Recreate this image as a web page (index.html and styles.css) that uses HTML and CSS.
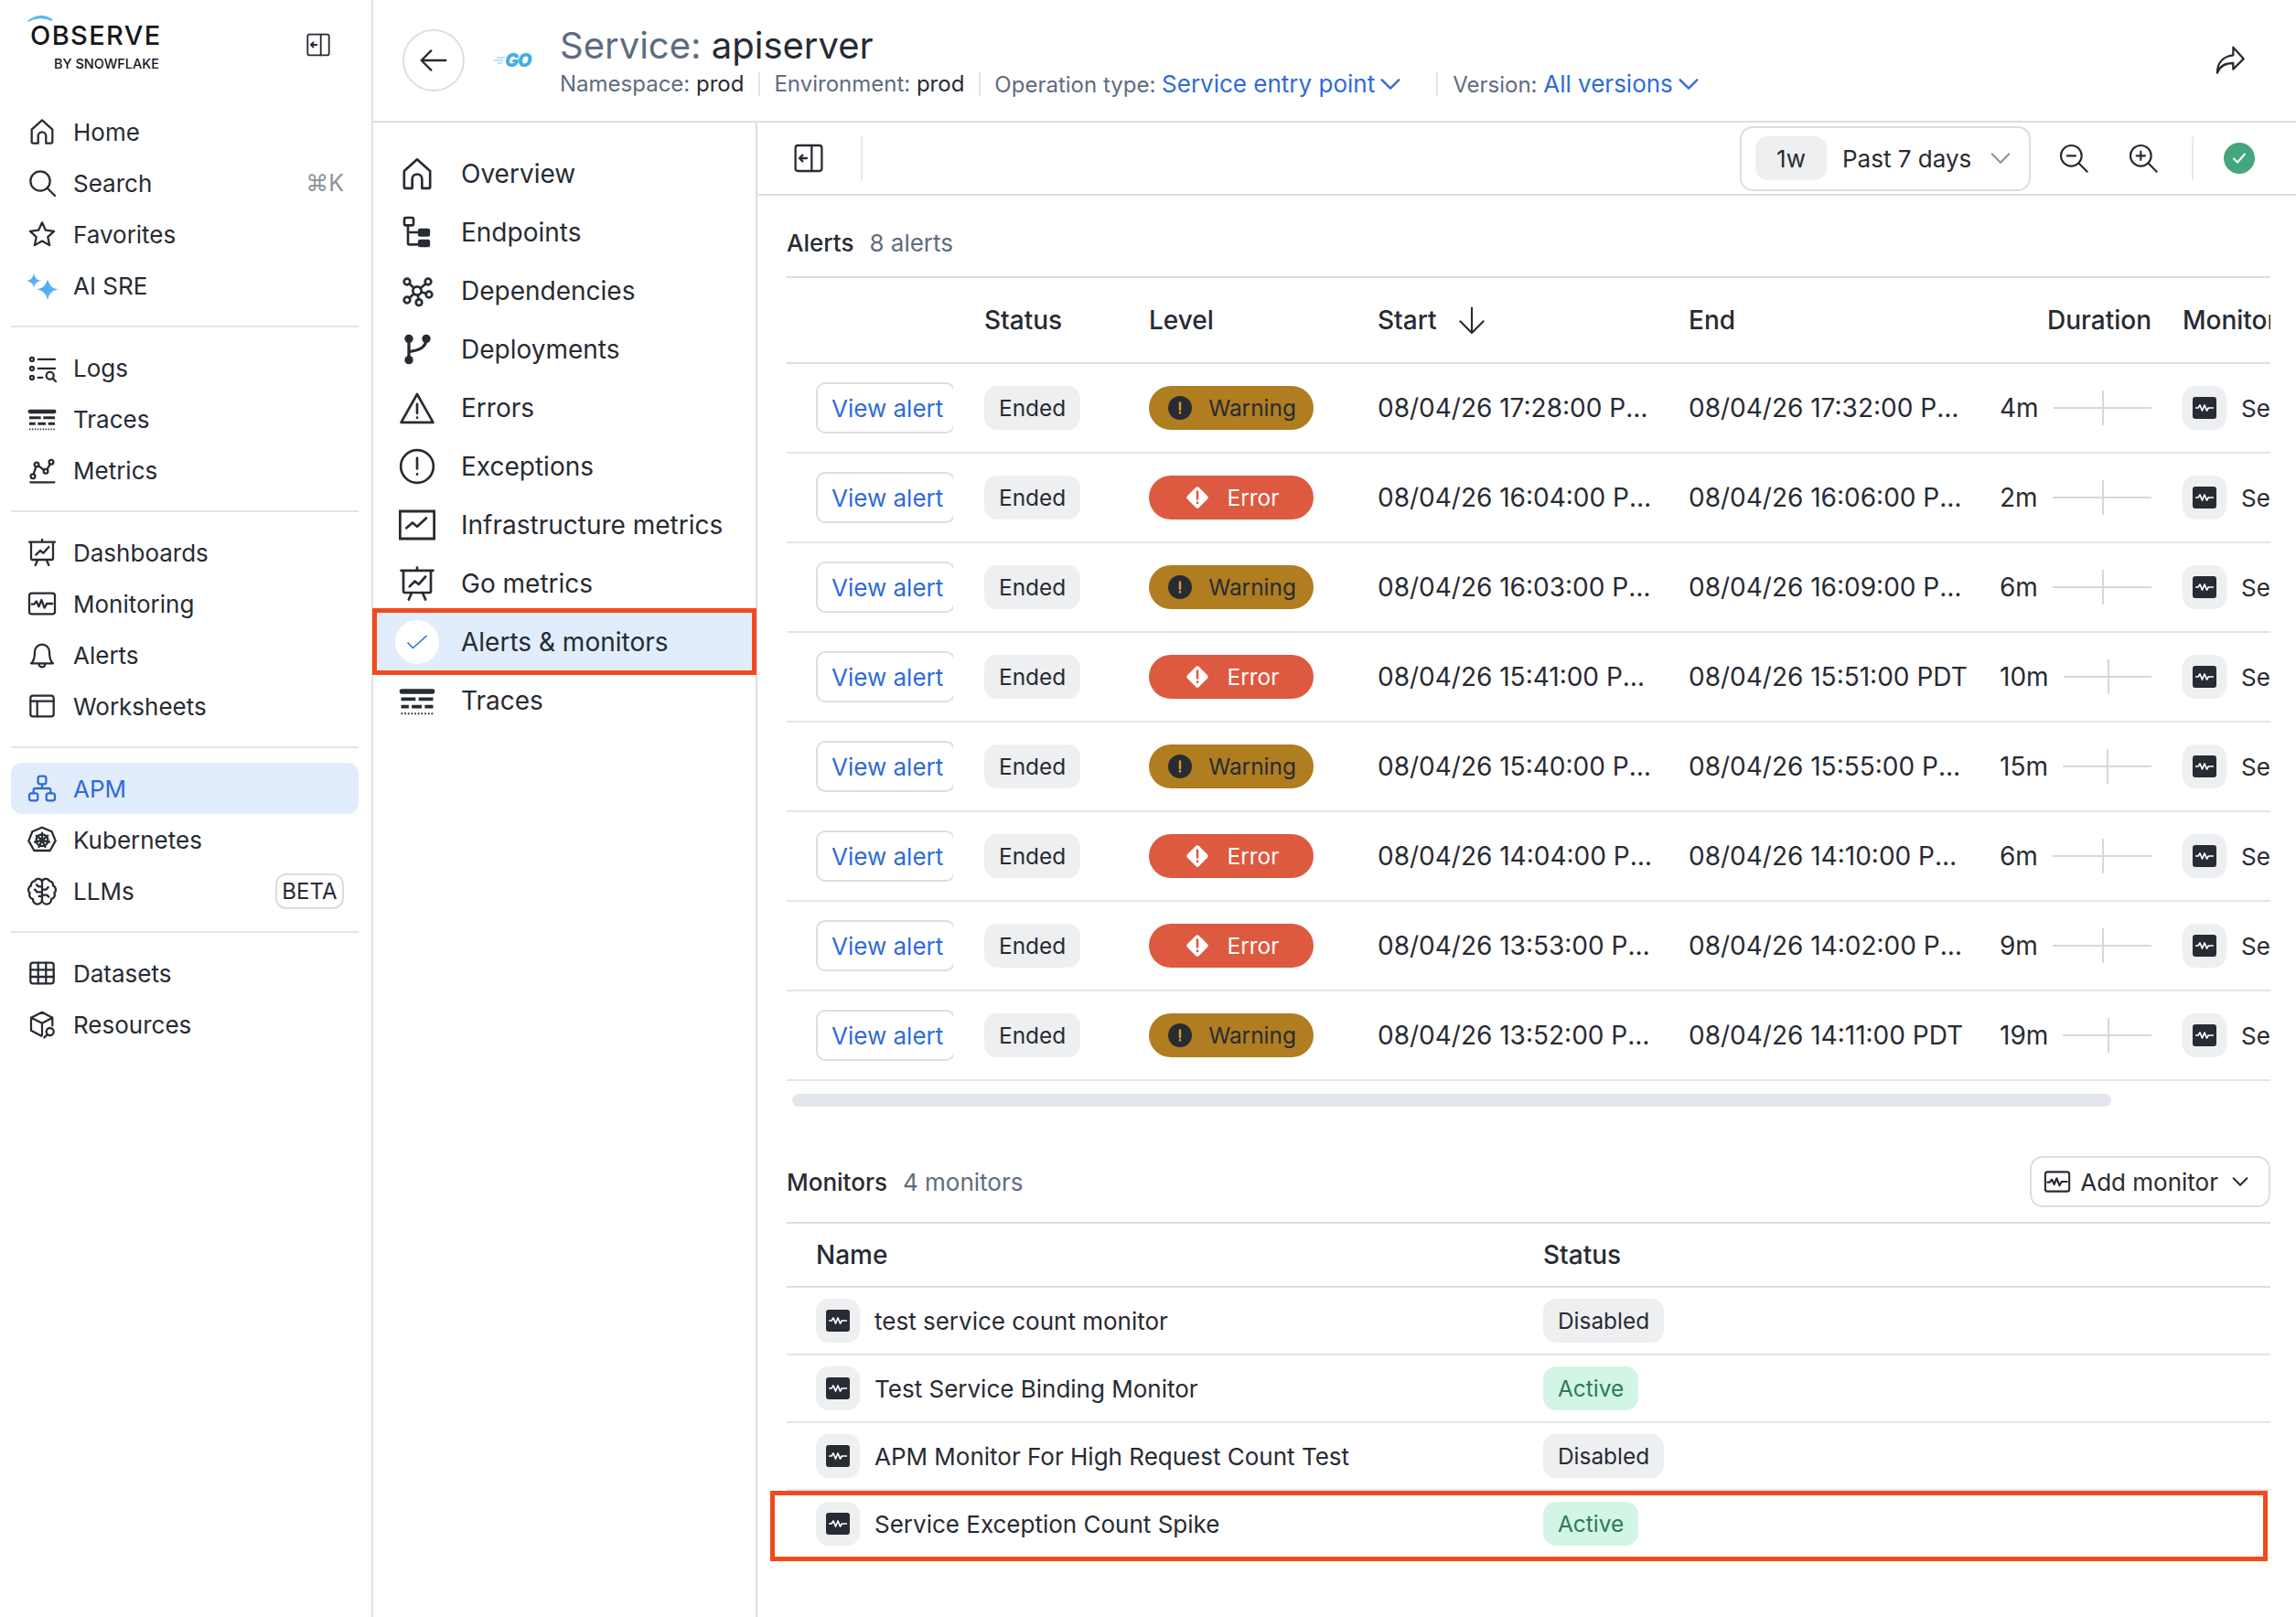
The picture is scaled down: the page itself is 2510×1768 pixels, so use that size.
FILE: index.html
```html
<!DOCTYPE html>
<html lang="en">

<head>
    <meta charset="UTF-8">
    <meta name="viewport" content="width=device-width, initial-scale=1.0">
    <title>Service: apiserver</title>
    <link rel="stylesheet" href="styles.css">
</head>

<body>
    <svg class="defs" width="0" height="0">
        <defs>
            <linearGradient id="spark" x1="0" y1="0" x2="1" y2="1">
                <stop offset="0" stop-color="#3f9fe8"/>
                <stop offset="1" stop-color="#6cc0f3"/>
            </linearGradient>
            <symbol id="i-home" viewBox="0 0 24 24"><path d="M3.5 20.5V10.2L12 2.5l8.500 7.700v10.300a1 1 0 0 1-1 1h-4.300v-6a3.200 3.200 0 0 0-6.400 0v6H4.500a1 1 0 0 1-1-1z"/></symbol>
            <symbol id="i-search" viewBox="0 0 24 24"><circle cx="10.500" cy="10.500" r="8"/><path d="M16.500 16.500l6 6"/></symbol>
            <symbol id="i-star" viewBox="0 0 24 24"><path d="M12 2.500l2.900 6.300 6.900.8-5.100 4.700 1.400 6.800-6.100-3.400-6.100 3.400 1.400-6.800-5.100-4.700 6.900-.8z"/></symbol>
            <symbol id="i-logs" viewBox="0 0 24 24"><circle cx="3.700" cy="5.200" r="1.500"/><circle cx="3.700" cy="12.700" r="1.500"/><circle cx="3.700" cy="20.200" r="1.500"/><path d="M8.800 5.200h13.700M8.800 12.700h13.700M8.800 20.200h3.400"/><circle cx="18.500" cy="18.500" r="3"/><path d="M20.700 20.700l2.800 2.800"/></symbol>
            <symbol id="i-traces" viewBox="0 0 24 24"><path class="thick" d="M2 6h20"/><path class="mid" d="M1.500 11h9.500M13 11h9.500M1.500 16h5M8.500 16h6.500M17 16h5.500"/><path class="dots" d="M1.500 20.500h21"/></symbol>
            <symbol id="i-metrics" viewBox="0 0 24 24"><circle cx="4.500" cy="17" r="1.800"/><circle cx="7.500" cy="7.500" r="1.800"/><circle cx="15" cy="13" r="1.800"/><circle cx="19.500" cy="5.500" r="1.800"/><path d="M5 15.300l2-6M9 8.500l4.500 3.300M16 11.500l2.600-4.400M2.500 22h19.500"/></symbol>
            <symbol id="i-dash" viewBox="0 0 24 24"><path d="M1.500 3.500h21M12 1.500v2M3 3.500V17a1 1 0 0 0 1 1h16a1 1 0 0 0 1-1V3.500M7 14l3.500-3.500 2.500 2 4.500-5M8.500 18l-2 4.500M15.500 18l2 4.500"/></symbol>
            <symbol id="i-monitor" viewBox="0 0 24 24"><rect x="1.500" y="3.500" width="21" height="17" rx="2"/><path d="M3.500 12.500h2l1.800-2.500 2 4.500 2.200-5.500 2.500 6.500 1.800-3.500h4.700"/></symbol>
            <symbol id="i-bell" viewBox="0 0 24 24"><path d="M6 9.500a6 6 0 0 1 12 0c0 6 1.200 8 3 9.500H3c1.800-1.500 3-3.500 3-9.500zM9.500 19.500a2.500 2.500 0 0 0 5 0"/></symbol>
            <symbol id="i-sheet" viewBox="0 0 24 24"><rect x="2.500" y="3.500" width="19" height="17" rx="2"/><path d="M2.500 8h19M8 8v12.500"/></symbol>
            <symbol id="i-apm" viewBox="0 0 24 24"><rect x="8.700" y="2" width="6.600" height="6.500" rx="1.800"/><rect x="1.500" y="16" width="7" height="6" rx="1.800"/><rect x="15.500" y="16" width="7" height="6" rx="1.800"/><path d="M12 8.500V12M5 16v-2.500a1.500 1.500 0 0 1 1.500-1.500h11a1.500 1.500 0 0 1 1.500 1.500V16"/></symbol>
            <symbol id="i-kube" viewBox="0 0 24 24"><path d="M12 2l8 3.500 3 7.500-4.500 8h-13L1 13l3-7.500z"/><circle cx="12" cy="12.500" r="4.800"/><circle cx="12" cy="12.500" r="1.200"/><path d="M12 6.500v4.800M16.700 8.800l-3.700 3M18 13.900l-4.800-1.100M14.600 18l-2.100-4.400M9.400 18l2.100-4.400M6 13.900l4.800-1.100M7.300 8.800l3.700 3"/></symbol>
            <symbol id="i-brain" viewBox="0 0 24 24"><path d="M12 4.500a3.200 3.200 0 0 0-6-.5 3.300 3.300 0 0 0-3 3.800 3.600 3.600 0 0 0-1 6 3.500 3.500 0 0 0 2.500 5 3.500 3.500 0 0 0 7.500.7zM12 4.500a3.200 3.200 0 0 1 6-.5 3.300 3.300 0 0 1 3 3.800 3.600 3.600 0 0 1 1 6 3.500 3.500 0 0 1-2.500 5 3.500 3.500 0 0 1-7.500.7M12 4.500v15M12 8.500H9L7.500 7M12 13H8l-2-2M12 16.500H9.500M12 11h3.500L17 9M12 15.500h4l1.500 1.500"/></symbol>
            <symbol id="i-grid" viewBox="0 0 24 24"><rect x="2.500" y="3.500" width="19" height="17" rx="2"/><path d="M2.500 9.300h19M2.500 15h19M8.800 3.500v17M15.200 3.500v17"/></symbol>
            <symbol id="i-cube" viewBox="0 0 24 24"><path d="M20.500 13V6.500L12 2 3 6.500V17l8.500 4.500M3 6.500l9 4.500 8.500-4.500M12 11v10"/><circle cx="18.500" cy="18" r="3"/><path d="M16.300 20.200l-2.500 2.600"/></symbol>
            <symbol id="i-endpoints" viewBox="0 0 24 24"><rect x="3.600" y="2.400" width="6" height="5" rx="1"/><path d="M6 7.400V19a1 1 0 0 0 1 1h5M6 12h6"/><rect class="solid" x="12.500" y="9.400" width="8" height="5.500" rx="1.500"/><rect class="solid" x="12.500" y="16.700" width="8" height="5" rx="1.500"/></symbol>
            <symbol id="i-deps" viewBox="0 0 24 24"><circle cx="12" cy="12" r="2.800"/><circle cx="5.400" cy="6" r="2"/><circle cx="19.200" cy="6" r="2"/><circle cx="5.400" cy="18" r="2"/><circle cx="13.200" cy="19.600" r="2"/><circle cx="19.800" cy="14.400" r="2"/><path d="M6.900 7.400l3 2.700M17.700 7.400l-3.600 2.800M6.900 16.600l3-2.700M12.500 14.800l.4 2.800M14.800 12.900l3 .8"/></symbol>
            <symbol id="i-branch" viewBox="0 0 24 24"><circle class="solid" cx="6.600" cy="5" r="2.800"/><circle class="solid" cx="6.600" cy="19" r="2.800"/><circle class="solid" cx="18" cy="5" r="2.800"/><path class="wire" d="M6.600 5v14M18 5c0 5.500-4 7.500-11.400 8.600"/></symbol>
            <symbol id="i-warn" viewBox="0 0 24 24"><path d="M12 3l10.500 18.500h-21zM12 9.500v6M12 18.300v.2"/></symbol>
            <symbol id="i-exc" viewBox="0 0 24 24"><circle cx="12" cy="12" r="10.700"/><path d="M12 6.500v7M12 17v.2"/></symbol>
            <symbol id="i-infra" viewBox="0 0 24 24"><path class="square" d="M.8 3h22.400v18H.8z"/><path d="M5 14l4-3.500 3 2.500 6-5.500"/></symbol>
            <symbol id="i-panel" viewBox="0 0 24 24"><rect x="1.200" y="1.500" width="21.600" height="21" rx="2"/><path d="M14.500 1.500v21M10.500 12h-6M7 9.500L4.500 12 7 14.500"/></symbol>
            <symbol id="i-zoomout" viewBox="0 0 24 24"><circle cx="10" cy="10" r="8.500"/><path d="M16.200 16.200l6.800 6.800M6.500 10h7"/></symbol>
            <symbol id="i-zoomin" viewBox="0 0 24 24"><circle cx="10" cy="10" r="8.500"/><path d="M16.200 16.200l6.800 6.800M6.500 10h7M10 6.500v7"/></symbol>
            <symbol id="i-share" viewBox="0 0 24 24"><path d="M14.500 2l8.500 9.500-8.500 8.500v-5C8 15 3.500 17.500 1.500 23 1.500 15 6 9.500 14.500 8.500z"/></symbol>
            <symbol id="i-back" viewBox="0 0 24 24"><path d="M22 12H2M10 4l-8 8 8 8"/></symbol>
            <symbol id="i-chev" viewBox="0 0 24 24"><path d="M4 8l8 8 8-8"/></symbol>
            <symbol id="i-pulse" viewBox="0 0 26 24"><rect class="solid" width="26" height="24" rx="3"/><path class="pulse" d="M3 12h3l2-3 2.500 6 2.500-6 2.500 6 1.800-3H23"/></symbol>
            <symbol id="i-warnfill" viewBox="0 0 26 26"><circle class="dark" cx="13" cy="13" r="13"/><path class="amber" d="M13 7.500v7.500M13 18v.4"/></symbol>
            <symbol id="i-errfill" viewBox="0 0 30 30"><rect class="whitefill" x="6" y="6" width="18" height="18" rx="2.500" transform="rotate(45 15 15)"/><path class="red" d="M15 8.500v8M15 20.500v.4"/></symbol>
        </defs>
    </svg>

    <aside class="sidebar">
        <div class="logo-row">
            <div class="logo">
                <svg class="logo-arc" width="30" height="9" viewBox="0 0 30 9"><path d="M1 8Q15 -3 29 6.500L27.500 8Q15 2 2 9z"/></svg>
                <div class="logo-name">OBSERVE</div>
                <div class="logo-sub">BY SNOWFLAKE</div>
            </div>
            <svg class="icon icon-collapse"><use href="#i-panel"/></svg>
        </div>
        <nav class="nav-group">
            <a class="nav-item"><svg class="icon"><use href="#i-home"/></svg>Home</a>
            <a class="nav-item"><svg class="icon"><use href="#i-search"/></svg>Search<span class="shortcut">⌘K</span></a>
            <a class="nav-item"><svg class="icon"><use href="#i-star"/></svg>Favorites</a>
            <a class="nav-item">
                <svg class="icon-spark" viewBox="0 0 24 24">
                    <path d="M16.500 7Q17.800 14.100 25 15.400Q17.800 16.700 16.500 23.800Q15.200 16.700 8 15.400Q15.200 14.100 16.500 7z"/>
                    <path d="M5.250 2Q6 7.500 11.250 8.250Q6 9 5.250 14.250Q4.500 9 -.75 8.250Q4.500 7.500 5.250 2z"/>
                </svg>AI SRE</a>
        </nav>
        <nav class="nav-group">
            <a class="nav-item"><svg class="icon"><use href="#i-logs"/></svg>Logs</a>
            <a class="nav-item"><svg class="icon"><use href="#i-traces"/></svg>Traces</a>
            <a class="nav-item"><svg class="icon"><use href="#i-metrics"/></svg>Metrics</a>
        </nav>
        <nav class="nav-group">
            <a class="nav-item"><svg class="icon"><use href="#i-dash"/></svg>Dashboards</a>
            <a class="nav-item"><svg class="icon"><use href="#i-monitor"/></svg>Monitoring</a>
            <a class="nav-item"><svg class="icon"><use href="#i-bell"/></svg>Alerts</a>
            <a class="nav-item"><svg class="icon"><use href="#i-sheet"/></svg>Worksheets</a>
        </nav>
        <nav class="nav-group">
            <a class="nav-item active"><svg class="icon"><use href="#i-apm"/></svg>APM</a>
            <a class="nav-item"><svg class="icon"><use href="#i-kube"/></svg>Kubernetes</a>
            <a class="nav-item"><svg class="icon"><use href="#i-brain"/></svg>LLMs<span class="beta">BETA</span></a>
        </nav>
        <nav class="nav-group">
            <a class="nav-item"><svg class="icon"><use href="#i-grid"/></svg>Datasets</a>
            <a class="nav-item"><svg class="icon"><use href="#i-cube"/></svg>Resources</a>
        </nav>
    </aside>

    <div class="main">
        <header class="header">
            <button class="back"><svg class="icon icon-back"><use href="#i-back"/></svg></button>
            <div class="go-logo">
                <svg class="go-lines" width="12" height="8" viewBox="0 0 12 8"><path d="M3 1h9M0 4h10M4 7h5"/></svg>
                <span>GO</span>
            </div>
            <div class="title-block">
                <h1 class="title"><span class="muted">Service:</span> apiserver</h1>
                <div class="meta">
                    <span><span class="muted">Namespace:</span> prod</span>
                    <i class="meta-sep"></i>
                    <span><span class="muted">Environment:</span> prod</span>
                    <i class="meta-sep"></i>
                    <span><span class="muted">Operation type:</span> <a class="link">Service entry point</a></span>
                    <svg class="icon icon-chev-blue"><use href="#i-chev"/></svg>
                    <i class="meta-sep meta-sep-wide"></i>
                    <span><span class="muted">Version:</span> <a class="link">All versions</a></span>
                    <svg class="icon icon-chev-blue"><use href="#i-chev"/></svg>
                </div>
            </div>
            <svg class="icon icon-share"><use href="#i-share"/></svg>
        </header>

        <div class="body-row">
            <nav class="subnav">
                <a class="sub-item"><svg class="icon icon-sub"><use href="#i-home"/></svg>Overview</a>
                <a class="sub-item"><svg class="icon icon-sub"><use href="#i-endpoints"/></svg>Endpoints</a>
                <a class="sub-item"><svg class="icon icon-sub"><use href="#i-deps"/></svg>Dependencies</a>
                <a class="sub-item"><svg class="icon icon-sub"><use href="#i-branch"/></svg>Deployments</a>
                <a class="sub-item"><svg class="icon icon-sub"><use href="#i-warn"/></svg>Errors</a>
                <a class="sub-item"><svg class="icon icon-sub"><use href="#i-exc"/></svg>Exceptions</a>
                <a class="sub-item"><svg class="icon icon-sub"><use href="#i-infra"/></svg>Infrastructure metrics</a>
                <a class="sub-item"><svg class="icon icon-sub"><use href="#i-dash"/></svg>Go metrics</a>
                <a class="sub-item selected">
                    <span class="check-dot"><svg width="24" height="16" viewBox="0 0 24 16"><path d="M1.500 8.500l6 6L22.500 1"/></svg></span>Alerts &amp; monitors</a>
                <a class="sub-item"><svg class="icon icon-sub"><use href="#i-traces"/></svg>Traces</a>
            </nav>

            <main class="content">
                <div class="toolbar">
                    <svg class="icon icon-panel"><use href="#i-panel"/></svg>
                    <i class="tool-sep"></i>
                    <div class="time-select">
                        <span class="time-pill">1w</span>
                        <span class="time-label">Past 7 days</span>
                        <svg class="icon icon-chev-gray"><use href="#i-chev"/></svg>
                    </div>
                    <svg class="icon icon-zoom"><use href="#i-zoomout"/></svg>
                    <svg class="icon icon-zoom"><use href="#i-zoomin"/></svg>
                    <i class="tool-sep tool-sep-right"></i>
                    <span class="ok-dot"><svg width="16" height="14" viewBox="0 0 16 14"><path d="M2 7.500l4 4L14 2.500"/></svg></span>
                </div>

                <section class="panel">
                    <div class="section-head alerts-head"><span class="section-name">Alerts</span><span class="count">8 alerts</span></div>

                    <div class="alert-grid grid-head">
                        <div></div>
                        <div>Status</div>
                        <div>Level</div>
                        <div class="start-head">Start <svg class="icon icon-sort" viewBox="0 0 24 24"><path d="M12 2v20M2.500 13l9.500 9.500 9.500-9.500"/></svg></div>
                        <div>End</div>
                        <div class="duration-head">Duration</div>
                        <div class="clip">Monitor</div>
                    </div>

                    <div class="alert-grid alert-row">
                        <div class="btn-clip"><a class="view-alert">View alert</a></div>
                        <div><span class="tag">Ended</span></div>
                        <div><span class="level warning"><svg class="level-icon"><use href="#i-warnfill"/></svg>Warning</span></div>
                        <div class="cut cut-start">08/04/26 17:28:00 PDT</div>
                        <div class="cut">08/04/26 17:32:00 PDT</div>
                        <div class="duration"><span>4m</span><i class="spark"></i></div>
                        <div class="monitor-cell"><span class="mon-box"><svg class="mon-icon"><use href="#i-pulse"/></svg></span>Service</div>
                    </div>
                    <div class="alert-grid alert-row">
                        <div class="btn-clip"><a class="view-alert">View alert</a></div>
                        <div><span class="tag">Ended</span></div>
                        <div><span class="level error"><svg class="level-icon-err"><use href="#i-errfill"/></svg>Error</span></div>
                        <div class="cut cut-start">08/04/26 16:04:00 PDT</div>
                        <div class="cut">08/04/26 16:06:00 PDT</div>
                        <div class="duration"><span>2m</span><i class="spark"></i></div>
                        <div class="monitor-cell"><span class="mon-box"><svg class="mon-icon"><use href="#i-pulse"/></svg></span>Service</div>
                    </div>
                    <div class="alert-grid alert-row">
                        <div class="btn-clip"><a class="view-alert">View alert</a></div>
                        <div><span class="tag">Ended</span></div>
                        <div><span class="level warning"><svg class="level-icon"><use href="#i-warnfill"/></svg>Warning</span></div>
                        <div class="cut cut-start">08/04/26 16:03:00 PDT</div>
                        <div class="cut">08/04/26 16:09:00 PDT</div>
                        <div class="duration"><span>6m</span><i class="spark"></i></div>
                        <div class="monitor-cell"><span class="mon-box"><svg class="mon-icon"><use href="#i-pulse"/></svg></span>Service</div>
                    </div>
                    <div class="alert-grid alert-row">
                        <div class="btn-clip"><a class="view-alert">View alert</a></div>
                        <div><span class="tag">Ended</span></div>
                        <div><span class="level error"><svg class="level-icon-err"><use href="#i-errfill"/></svg>Error</span></div>
                        <div class="cut cut-start">08/04/26 15:41:00 PDT</div>
                        <div class="cut">08/04/26 15:51:00 PDT</div>
                        <div class="duration"><span>10m</span><i class="spark"></i></div>
                        <div class="monitor-cell"><span class="mon-box"><svg class="mon-icon"><use href="#i-pulse"/></svg></span>Service</div>
                    </div>
                    <div class="alert-grid alert-row">
                        <div class="btn-clip"><a class="view-alert">View alert</a></div>
                        <div><span class="tag">Ended</span></div>
                        <div><span class="level warning"><svg class="level-icon"><use href="#i-warnfill"/></svg>Warning</span></div>
                        <div class="cut cut-start">08/04/26 15:40:00 PDT</div>
                        <div class="cut">08/04/26 15:55:00 PDT</div>
                        <div class="duration"><span>15m</span><i class="spark"></i></div>
                        <div class="monitor-cell"><span class="mon-box"><svg class="mon-icon"><use href="#i-pulse"/></svg></span>Service</div>
                    </div>
                    <div class="alert-grid alert-row">
                        <div class="btn-clip"><a class="view-alert">View alert</a></div>
                        <div><span class="tag">Ended</span></div>
                        <div><span class="level error"><svg class="level-icon-err"><use href="#i-errfill"/></svg>Error</span></div>
                        <div class="cut cut-start">08/04/26 14:04:00 PDT</div>
                        <div class="cut">08/04/26 14:10:00 PDT</div>
                        <div class="duration"><span>6m</span><i class="spark"></i></div>
                        <div class="monitor-cell"><span class="mon-box"><svg class="mon-icon"><use href="#i-pulse"/></svg></span>Service</div>
                    </div>
                    <div class="alert-grid alert-row">
                        <div class="btn-clip"><a class="view-alert">View alert</a></div>
                        <div><span class="tag">Ended</span></div>
                        <div><span class="level error"><svg class="level-icon-err"><use href="#i-errfill"/></svg>Error</span></div>
                        <div class="cut cut-start">08/04/26 13:53:00 PDT</div>
                        <div class="cut">08/04/26 14:02:00 PDT</div>
                        <div class="duration"><span>9m</span><i class="spark"></i></div>
                        <div class="monitor-cell"><span class="mon-box"><svg class="mon-icon"><use href="#i-pulse"/></svg></span>Service</div>
                    </div>
                    <div class="alert-grid alert-row">
                        <div class="btn-clip"><a class="view-alert">View alert</a></div>
                        <div><span class="tag">Ended</span></div>
                        <div><span class="level warning"><svg class="level-icon"><use href="#i-warnfill"/></svg>Warning</span></div>
                        <div class="cut cut-start">08/04/26 13:52:00 PDT</div>
                        <div class="cut">08/04/26 14:11:00 PDT</div>
                        <div class="duration"><span>19m</span><i class="spark"></i></div>
                        <div class="monitor-cell"><span class="mon-box"><svg class="mon-icon"><use href="#i-pulse"/></svg></span>Service</div>
                    </div>

                    <div class="h-scroll"></div>

                    <div class="section-head monitors-head">
                        <span class="section-name">Monitors</span><span class="count">4 monitors</span>
                        <button class="add-monitor"><svg class="icon icon-add"><use href="#i-monitor"/></svg>Add monitor<svg class="icon icon-chev-dark"><use href="#i-chev"/></svg></button>
                    </div>

                    <div class="mon-grid grid-head-small">
                        <div>Name</div>
                        <div>Status</div>
                    </div>
                    <div class="mon-grid mon-row">
                        <div class="mon-name"><span class="mon-box"><svg class="mon-icon"><use href="#i-pulse"/></svg></span>test service count monitor</div>
                        <div><span class="tag">Disabled</span></div>
                    </div>
                    <div class="mon-grid mon-row">
                        <div class="mon-name"><span class="mon-box"><svg class="mon-icon"><use href="#i-pulse"/></svg></span>Test Service Binding Monitor</div>
                        <div><span class="tag tag-green">Active</span></div>
                    </div>
                    <div class="mon-grid mon-row">
                        <div class="mon-name"><span class="mon-box"><svg class="mon-icon"><use href="#i-pulse"/></svg></span>APM Monitor For High Request Count Test</div>
                        <div><span class="tag">Disabled</span></div>
                    </div>
                    <div class="mon-grid mon-row mon-row-marked">
                        <div class="mon-name"><span class="mon-box"><svg class="mon-icon"><use href="#i-pulse"/></svg></span>Service Exception Count Spike</div>
                        <div><span class="tag tag-green">Active</span></div>
                    </div>
                </section>
            </main>
        </div>
    </div>
</body>

</html>
```
FILE: styles.css
```css
* {
    box-sizing: border-box;
}

body {
    font-family: Inter, "Noto Sans", sans-serif;
    display: flex;
    height: 100vh;
    margin: 0;
    overflow: hidden;
    background-color: #fff;
    color: #272b33;
}

a {
    color: inherit;
}

.defs {
    position: absolute;
}

/* shared svg icon look */
.icon {
    flex: none;
    width: 32px;
    height: 32px;
    fill: none;
    stroke: currentColor;
    stroke-width: 1.7;
    stroke-linecap: round;
    stroke-linejoin: round;
}

.thick { stroke-width: 3.2; }
.mid { stroke-width: 2.2; stroke-linecap: butt; }
.dots { stroke-width: 1.2; stroke-dasharray: 1 1.2; stroke-linecap: butt; }
.solid { fill: currentColor; stroke: none; }
.square { stroke-linejoin: miter; stroke-width: 1.7; }
.wire { stroke-width: 2; }

/* sidebar */
.sidebar {
    flex: none;
    width: 408px;
    border-right: 2px solid #dfe1e8;
}

.logo-row {
    display: flex;
    align-items: flex-start;
    justify-content: space-between;
    height: 116px;
    padding: 27px 45px 0 33px;
}

.logo {
    position: relative;
    width: 141px;
}

.logo-arc {
    position: absolute;
    left: -4px;
    top: -12px;
    fill: #5db8e8;
}

.logo-name {
    font-size: 29px;
    line-height: 24px;
    font-weight: 500;
    letter-spacing: 1.4px;
    color: #14161a;
    white-space: nowrap;
}

.logo-sub {
    margin-top: 13px;
    font-size: 14.500px;
    line-height: 12px;
    font-weight: 500;
    text-align: right;
    color: #14161a;
    white-space: nowrap;
}

.icon-collapse {
    width: 26px;
    height: 26px;
    margin-top: 9px;
}

.nav-group {
    margin: 0 14px 16px 12px;
    padding-bottom: 16px;
    border-bottom: 2px solid #e2e5ea;
}

.nav-group:last-child {
    border-bottom: none;
}

.nav-item {
    display: flex;
    align-items: center;
    gap: 18px;
    height: 56px;
    padding: 0 16px 0 18px;
    font-size: 26px;
    border-radius: 12px;
}

.nav-item.active {
    background-color: #e1edfc;
    color: #2f6bd8;
}

.icon-spark {
    flex: none;
    width: 32px;
    height: 32px;
    overflow: visible;
    fill: url(#spark);
}

.shortcut {
    margin-left: auto;
    font-family: Inter, "DejaVu Sans", sans-serif;
    font-size: 25px;
    color: #8f939b;
}

.beta {
    margin-left: auto;
    padding: 0 5.500px;
    height: 39px;
    line-height: 35px;
    font-size: 24px;
    border: 2px solid #dadce3;
    border-radius: 12px;
}

/* top header */
.main {
    flex: 1;
    min-width: 0;
    display: flex;
    flex-direction: column;
}

.header {
    flex: none;
    display: flex;
    align-items: center;
    height: 134px;
    padding: 0 56px 0 32px;
    border-bottom: 2px solid #dcdee5;
}

.back {
    flex: none;
    display: flex;
    align-items: center;
    justify-content: center;
    width: 68px;
    height: 68px;
    padding: 0;
    background: #fff;
    border: 2px solid #dcdee5;
    border-radius: 50%;
    color: #272b33;
}

.icon-back {
    width: 32px;
    height: 32px;
}

.go-logo {
    flex: none;
    display: flex;
    align-items: center;
    width: 40px;
    margin: 0 32px;
    font-size: 20px;
    line-height: 20px;
    font-weight: 900;
    font-style: italic;
    letter-spacing: -1px;
    color: #3fb0e0;
}

.go-lines {
    flex: none;
    fill: none;
    stroke: #7cc6e6;
    stroke-width: 1.2;
}

.title-block {
    padding-top: 4px;
}

.title {
    margin: 0;
    font-size: 40px;
    line-height: 48px;
    font-weight: 400;
}

.muted {
    color: #5f6b80;
}

.meta {
    display: flex;
    align-items: center;
    gap: 16px;
    font-size: 24px;
    line-height: 36px;
    white-space: nowrap;
}

.meta-sep {
    width: 2px;
    height: 26px;
    background-color: #e1e3e9;
}

.meta-sep + span {
    margin-left: -1px;
}

.meta-sep-wide {
    margin: 0 1px 0 20px;
}

.link {
    font-size: 26px;
    color: #2f6bd8;
}

.icon-chev-blue {
    width: 28px;
    height: 28px;
    margin-left: -13px;
    color: #2f6bd8;
    stroke-width: 2;
}

.icon-share {
    width: 32px;
    height: 32px;
    margin-left: auto;
    margin-top: -2px;
}

/* secondary nav */
.body-row {
    flex: 1;
    min-height: 0;
    display: flex;
}

.subnav {
    flex: none;
    width: 420px;
    padding-top: 24px;
    border-right: 2px solid #dcdee5;
}

.sub-item {
    position: relative;
    display: flex;
    align-items: center;
    gap: 28px;
    height: 64px;
    padding-left: 28px;
    font-size: 28px;
}

.icon-sub {
    width: 40px;
    height: 40px;
    stroke-width: 1.6;
}

.sub-item.selected {
    gap: 24px;
    padding-left: 24px;
    background-color: #e1edfc;
}

/* the red marker drawn over the row */
.sub-item.selected::after {
    content: "";
    position: absolute;
    inset: -5px -1px -4px -1px;
    border: 5px solid #f24a1d;
    pointer-events: none;
}

.check-dot {
    flex: none;
    display: flex;
    align-items: center;
    justify-content: center;
    width: 48px;
    height: 48px;
    background-color: #fff;
    border-radius: 50%;
}

.check-dot svg {
    fill: none;
    stroke: #2f6bd8;
    stroke-width: 1.6;
}

/* content */
.content {
    flex: 1;
    min-width: 0;
    display: flex;
    flex-direction: column;
}

.toolbar {
    flex: none;
    display: flex;
    align-items: center;
    height: 80px;
    padding: 0 45px 0 40px;
    border-bottom: 2px solid #dcdee5;
}

.icon-panel {
    width: 32px;
    height: 32px;
}

.tool-sep {
    width: 2px;
    height: 48px;
    margin-left: 41px;
    background-color: #e8e9ee;
}

.tool-sep-right {
    margin-right: 33px;
}

.time-select {
    display: flex;
    align-items: center;
    width: 318px;
    height: 71px;
    margin: 0 31px 0 auto;
    padding-left: 15px;
    border: 2px solid #dcdee5;
    border-radius: 14px;
}

.time-pill {
    display: flex;
    align-items: center;
    justify-content: center;
    width: 78px;
    height: 48px;
    font-size: 26px;
    background-color: #eeeff1;
    border-radius: 14px;
}

.time-label {
    margin-left: 17px;
    font-size: 26px;
}

.icon-chev-gray {
    width: 28px;
    height: 28px;
    margin-left: 18px;
    color: #8f939b;
    stroke-width: 1.8;
}

.icon-zoom {
    width: 32px;
    height: 32px;
    margin-right: 44px;
    stroke-width: 1.6;
}

.icon-zoom + .tool-sep {
    margin-left: -7px;
}

.ok-dot {
    display: flex;
    align-items: center;
    justify-content: center;
    width: 34px;
    height: 34px;
    background-color: #44a67c;
    border-radius: 50%;
}

.ok-dot svg {
    fill: none;
    stroke: #fff;
    stroke-width: 2;
    stroke-linecap: round;
    stroke-linejoin: round;
}

.panel {
    flex: 1;
    min-height: 0;
    padding: 0 28px 0 32px;
    overflow: hidden;
}

.section-head {
    display: flex;
    align-items: center;
    gap: 17px;
    font-size: 26px;
}

.section-name {
    font-weight: 500;
}

.alerts-head {
    height: 88px;
    padding-top: 14px;
}

.count {
    color: #5f6b80;
}

/* alerts table */
.alert-grid {
    display: grid;
    grid-template-columns: 216px 180px 250px 340px 340px 200px 1fr;
    align-items: center;
    font-size: 26px;
}

.grid-head {
    height: 96px;
    font-size: 28px;
    font-weight: 500;
    border-top: 2px solid #dcdee5;
    border-bottom: 2px solid #dcdee5;
}

.start-head {
    display: flex;
    align-items: center;
    gap: 22px;
}

.icon-sort {
    width: 32px;
    height: 32px;
    stroke-width: 1.6;
}

.duration-head {
    grid-column: 6;
    margin-left: -110px;
    padding-right: 34px;
    text-align: right;
}

.clip {
    overflow: hidden;
    white-space: nowrap;
}

.alert-row {
    height: 98px;
    border-bottom: 2px solid #e2e5ea;
}

.btn-clip {
    width: 182px;
    padding-left: 32px;
    overflow: hidden;
}

.view-alert {
    display: flex;
    align-items: center;
    width: 152px;
    height: 56px;
    padding-left: 15px;
    color: #2f6bd8;
    border: 2px solid #dcdee5;
    border-radius: 10px;
}

.tag {
    display: inline-flex;
    align-items: center;
    height: 48px;
    padding: 0 16px;
    font-size: 24.400px;
    background-color: #eeeff1;
    border-radius: 14px;
}

.tag-green {
    color: #2a7a5c;
    background-color: #d3f5e6;
}

.level {
    display: flex;
    align-items: center;
    justify-content: center;
    gap: 18px;
    width: 180px;
    height: 48px;
    font-size: 24.400px;
    border-radius: 24px;
}

.warning {
    padding-left: 2px;
    background-color: #b07d20;
}

.error {
    color: #fff;
    background-color: #dd5a40;
}

.level-icon {
    width: 26px;
    height: 26px;
}

.level-icon-err {
    width: 30px;
    height: 30px;
}

.dark { fill: #272b33; }
.amber { stroke: #d69a2d; stroke-width: 2.500; stroke-linecap: round; fill: none; }
.whitefill { fill: #fff; }
.red { stroke: #dd5a40; stroke-width: 2.500; stroke-linecap: round; fill: none; }
.pulse { fill: none; stroke: #fff; stroke-width: 1.700; stroke-linejoin: round; }

.cut {
    width: 306px;
    font-size: 28px;
    overflow: hidden;
    white-space: nowrap;
    text-overflow: ellipsis;
}

.cut-start {
    width: 300px;
}

.duration {
    display: flex;
    align-items: center;
    gap: 16px;
    padding-right: 34px;
    font-size: 28px;
}

.spark {
    position: relative;
    flex: 1;
    height: 2px;
    background-color: #d5d8df;
}

.spark::after {
    content: "";
    position: absolute;
    left: 50%;
    top: -18px;
    width: 2px;
    height: 38px;
    background-color: #d5d8df;
}

.monitor-cell {
    display: flex;
    align-items: center;
    gap: 16px;
    overflow: hidden;
    white-space: nowrap;
}

.mon-box {
    flex: none;
    display: flex;
    align-items: center;
    justify-content: center;
    width: 48px;
    height: 48px;
    background-color: #eeeff1;
    border-radius: 14px;
}

.mon-icon {
    width: 26px;
    height: 24px;
    color: #272b33;
}

.h-scroll {
    width: 1442px;
    height: 14px;
    margin: 14px 0 0 6px;
    background-color: #e2e5ec;
    border-radius: 7px;
}

/* monitors */
.monitors-head {
    height: 88px;
    margin-top: 38px;
}

.add-monitor {
    display: flex;
    align-items: center;
    height: 56px;
    margin-left: auto;
    padding: 0 20px 0 13px;
    font-family: inherit;
    font-size: 26px;
    color: inherit;
    background: #fff;
    border: 2px solid #dcdee5;
    border-radius: 14px;
}

.icon-add {
    width: 30px;
    height: 30px;
    margin-right: 10px;
}

.icon-chev-dark {
    width: 22px;
    height: 22px;
    margin-left: 13px;
    stroke-width: 2.2;
}

.mon-grid {
    display: grid;
    grid-template-columns: 827px 1fr;
    align-items: center;
    font-size: 26px;
}

.grid-head-small {
    height: 72px;
    padding-left: 32px;
    grid-template-columns: 795px 1fr;
    font-size: 28px;
    font-weight: 500;
    border-top: 2px solid #dcdee5;
    border-bottom: 2px solid #dcdee5;
}

.mon-row {
    height: 74px;
    border-bottom: 2px solid #e2e5ea;
}

.mon-name {
    display: flex;
    align-items: center;
    gap: 16px;
    padding-left: 32px;
}

.mon-row-marked {
    position: relative;
}

.mon-row-marked::after {
    content: "";
    position: absolute;
    inset: 0 3px -5px -18px;
    border: 5px solid #f24a1d;
    pointer-events: none;
}
```
